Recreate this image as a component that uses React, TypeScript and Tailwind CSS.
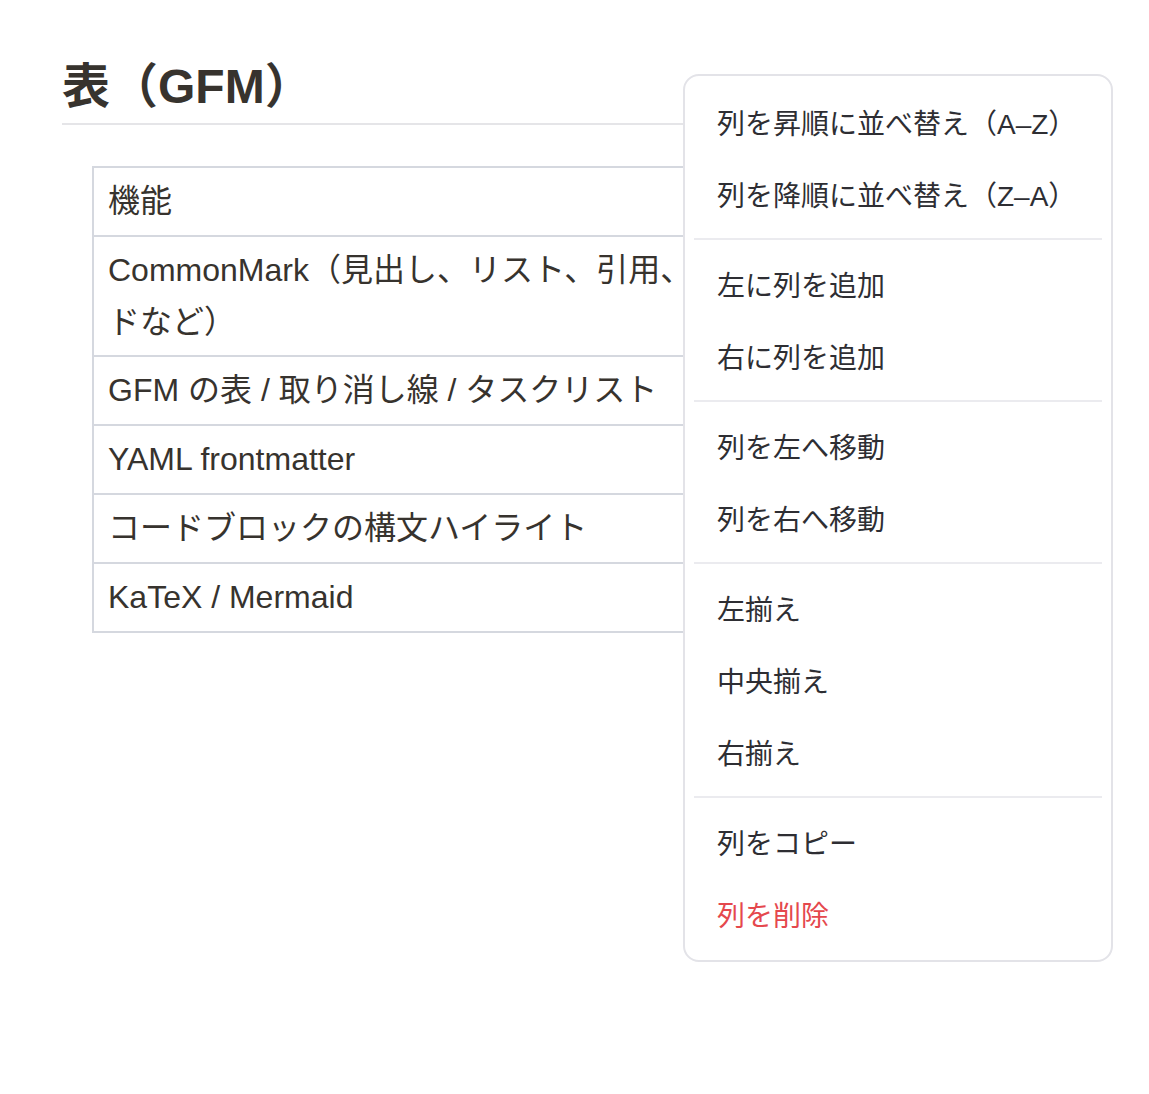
import React from "react";

const FONT = {
  fontFamily: '"Liberation Sans", "Noto Sans CJK JP", sans-serif',
};

const rows: string[] = [
  "CommonMark（見出し、リスト、引用、コードなど）",
  "GFM の表 / 取り消し線 / タスクリスト",
  "YAML frontmatter",
  "コードブロックの構文ハイライト",
  "KaTeX / Mermaid",
];

type Item = { label: string; danger?: boolean };

const groups: Item[][] = [
  [{ label: "列を昇順に並べ替え（A–Z）" }, { label: "列を降順に並べ替え（Z–A）" }],
  [{ label: "左に列を追加" }, { label: "右に列を追加" }],
  [{ label: "列を左へ移動" }, { label: "列を右へ移動" }],
  [{ label: "左揃え" }, { label: "中央揃え" }, { label: "右揃え" }],
  [{ label: "列をコピー" }, { label: "列を削除", danger: true }],
];

function ColumnMenu() {
  return (
    <div className="absolute left-[683px] top-[74px] w-[430px] rounded-[16px] border-2 border-[#e3e3e8] bg-white px-[9px] pb-[7px] pt-[13px]">
      {groups.map((group, gi) => (
        <div key={gi}>
          {gi > 0 && <div className="mb-[11px] mt-[5px] h-[2px] bg-[#ebebef]" />}
          {group.map((item) => (
            <div
              key={item.label}
              className={
                "flex h-[72px] items-center px-[23px] text-[28px] " +
                (item.danger ? "text-[#e5484d]" : "text-[#2e2e33]")
              }
            >
              {item.label}
            </div>
          ))}
        </div>
      ))}
    </div>
  );
}

export default function App() {
  return (
    <div className="relative h-[1094px] w-[1149px] overflow-hidden bg-white" style={FONT}>
      <div className="px-[62px] pt-[57px]">
        <h1 className="border-b-2 border-[#e5e5e8] pb-[6px] text-[48px] font-bold leading-[60px] text-[#37332e]">
          表（GFM）
        </h1>
        <div className="ml-[30px] mt-[41px]">
          <table className="w-[688px] table-fixed border-collapse text-[32px] leading-[52px] text-[#37332e]">
            <thead>
              <tr>
                <th className="border-2 border-[#d5d8df] py-[8px] pl-[14px] pr-[14px] text-left font-normal leading-[51px]">
                  機能
                </th>
              </tr>
            </thead>
            <tbody>
              {rows.map((r, i) => (
                <tr key={r}>
                  <td
                    className={
                      "border-2 border-[#d5d8df] pl-[14px] pr-[14px] " +
                      (i === 0 ? "pb-[7px] pt-[7px]" : "py-[8px] leading-[51px]")
                    }
                  >
                    {r}
                  </td>
                </tr>
              ))}
            </tbody>
          </table>
        </div>
      </div>
      <ColumnMenu />
    </div>
  );
}
